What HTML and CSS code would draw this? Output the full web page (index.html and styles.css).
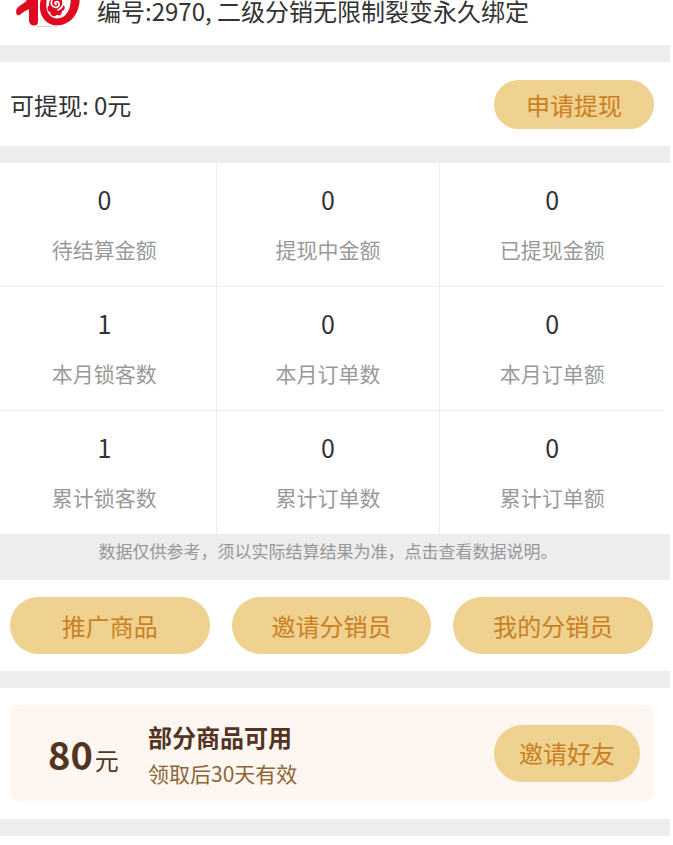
FILE: index.html
```html
<!DOCTYPE html>
<html lang="zh-CN">
<head>
    <meta charset="UTF-8">
    <meta name="viewport" content="width=device-width, initial-scale=1.0">
    <title>分销中心</title>
    <link rel="stylesheet" href="styles.css">
</head>
<body>
    <div class="page">
        <div class="header">
            <svg class="logo" viewBox="0 0 201 81" aria-hidden="true">
                <path fill="#e00a20" d="M38 0 C32 12 12 16 7 29 C5 40 9 49 17 45 C26 38 36 31 45 28 L45 62 C46 73 55 79 64 76 C73 74 72 66 72 58 L72 0 Z"/>
                <path fill="#e00a20" d="M80 0 C72 32 84 64 114 74 C150 84 194 58 197 0 L170 0 C170 30 156 52 134 55 C110 57 92 38 98 0 Z"/>
                <path fill="#e00a20" d="M108 14 C98 18 98 34 109 36 C107 49 124 52 129 44 C137 49 146 42 143 33 C154 31 155 18 147 14 Z"/>
                <circle cx="126" cy="12" r="21" fill="#e00a20"/>
                <path fill="none" stroke="#fff" stroke-width="5" stroke-linecap="round" d="M127 13 C121 13 122 5 128 5 C137 6 138 20 127 22 C114 22 109 11 114 0 M146 0 C151 14 142 26 132 30"/>
                <path stroke="#bbb" stroke-width="2" d="M66 79 H132"/>
            </svg>
            <div class="number">编号:2970, 二级分销无限制裂变永久绑定</div>
        </div>
        <div class="withdraw">
            <div class="money">可提现: 0元</div>
            <button class="btn apply">申请提现</button>
        </div>
        <div class="data">
            <div class="list">
                <div class="item"><div class="num">0</div><div class="name">待结算金额</div></div>
                <div class="item"><div class="num">0</div><div class="name">提现中金额</div></div>
                <div class="item"><div class="num">0</div><div class="name">已提现金额</div></div>
                <div class="item"><div class="num">1</div><div class="name">本月锁客数</div></div>
                <div class="item"><div class="num">0</div><div class="name">本月订单数</div></div>
                <div class="item"><div class="num">0</div><div class="name">本月订单额</div></div>
                <div class="item"><div class="num">1</div><div class="name">累计锁客数</div></div>
                <div class="item"><div class="num">0</div><div class="name">累计订单数</div></div>
                <div class="item"><div class="num">0</div><div class="name">累计订单额</div></div>
            </div>
        </div>
        <a class="tips" href="#">数据仅供参考，须以实际结算结果为准，点击查看数据说明。</a>
        <div class="menu">
            <button class="btn">推广商品</button>
            <button class="btn">邀请分销员</button>
            <button class="btn">我的分销员</button>
        </div>
        <div class="coupon-box">
            <div class="coupon">
                <div class="price"><b>80</b>元</div>
                <div class="info">
                    <div class="title">部分商品可用</div>
                    <div class="time">领取后30天有效</div>
                </div>
                <button class="btn invite">邀请好友</button>
            </div>
        </div>
    </div>
</body>
</html>
```

FILE: styles.css
```css
*{
    box-sizing: border-box;
}
body{
    margin: 0;
    background-color: #fff;
    color: #333;
    font-family: "Noto Sans CJK SC", sans-serif;
    font-size: 24px;
    line-height: 22px;
}
.page{
    margin-right: 3px;
}
/* grey strips between the blocks */
.header,.withdraw,.menu,.coupon-box{
    border-bottom: 17px solid #ededed;
}
.header{
    display: flex;
    align-items: flex-start;
    gap: 16px;
    height: 62px;
    padding-left: 14px;
}
.logo{
    width: 67px;
    height: 27px;
}
.btn{
    height: 57px;
    padding: 0;
    border: none;
    border-radius: 29px;
    background-color: #efd190;
    color: #cb7f22;
    font-family: inherit;
    font-size: 24px;
    line-height: 24px;
    cursor: pointer;
}
.withdraw{
    display: flex;
    justify-content: space-between;
    align-items: center;
    padding: 18px 16px 17px 10px;
}
.withdraw .apply{
    width: 160px;
    height: 49px;
}
.list{
    display: grid;
    grid-template-columns: repeat(3, 1fr);
    margin: 0 6px 0 -7px;
}
.item{
    padding: 25px 0 26px;
    border-right: 1px solid #ececec;
    border-bottom: 1px solid #ececec;
    text-align: center;
}
.item:nth-child(3n){
    border-right: none;
}
.item:nth-child(n+7){
    border-bottom: none;
}
.num{
    font-size: 25px;
}
.name{
    margin-top: 28px;
    color: #999;
    font-size: 21px;
}
.tips{
    display: block;
    height: 46px;
    padding-top: 6px;
    padding-right: 14px;
    background-color: #ededed;
    color: #97979b;
    font-size: 17px;
    text-align: center;
    text-decoration: none;
}
.menu{
    display: flex;
    gap: 22px;
    padding: 17px 17px 17px 10px;
}
.menu .btn{
    flex: 1;
}
.coupon-box{
    padding: 17px 16px 18px 10px;
}
.coupon{
    display: flex;
    align-items: center;
    height: 96px;
    padding: 0 14px 0 38px;
    border-radius: 8px;
    background-color: #fef7f1;
    color: #533422;
}
.price{
    width: 100px;
    padding-top: 8px;
}
.price b{
    margin-right: 2px;
    font-size: 38px;
}
.info{
    flex: 1;
    padding-top: 4px;
}
.title{
    font-weight: bold;
}
.time{
    margin-top: 14px;
    color: #8c6637;
    font-size: 21px;
}
.coupon .invite{
    width: 146px;
}
```
